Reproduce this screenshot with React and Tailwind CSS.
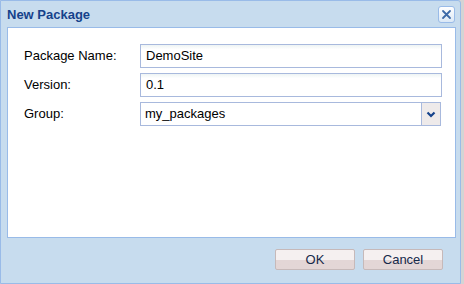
export default function App() {
    const font = { fontFamily: 'Tahoma, "Liberation Sans", sans-serif' };

    const fields = [
        { label: 'Package Name:', value: 'DemoSite' },
        { label: 'Version:', value: '0.1' },
    ];

    return (
        <div className="flex w-[464px] h-[284px] bg-[#d4d4d4]" style={font}>
            <div className="flex flex-col w-[461px] h-full bg-[#c7dcee] border border-[#99bbe8] rounded-tr-[3px]">
                <div className="flex items-center justify-between h-[26px] pl-[6px] pr-[5px]">
                    <span className="text-[13px] font-bold text-[#15428b] leading-none">New Package</span>
                    <button className="w-[17px] h-[17px] mt-[1px] rounded-[3px] border border-[#99bbe8] bg-gradient-to-b from-white to-[#dbe8f6] flex items-center justify-center">
                        <svg width="11" height="11" viewBox="0 0 11 11">
                            <path d="M2 2 L9 9 M9 2 L2 9" stroke="#3d6aa8" strokeWidth="1.8" strokeLinecap="round" />
                        </svg>
                    </button>
                </div>
                <div className="flex-1 ml-[6px] mr-[4px] bg-white border border-[#99bbe8] pt-[16px] pl-[16px]">
                    <div className="flex flex-col gap-[5px]">
                        {fields.map(f => (
                            <div className="flex items-center" key={f.label}>
                                <label className="w-[116px] text-[13px] text-[#000]">{f.label}</label>
                                <div className="w-[302px] h-[24px] border border-[#a8b9dd] bg-gradient-to-b from-[#eef4f4] to-white to-[20%] px-[5px] flex items-center text-[13px] text-black">
                                    {f.value}
                                </div>
                            </div>
                        ))}
                        <div className="flex items-center">
                            <label className="w-[116px] text-[13px] text-[#000]">Group:</label>
                            <div className="w-[301px] h-[24px] border border-[#a8b9dd] bg-white flex items-center text-[13px] text-black">
                                <span className="flex-1 px-[4px]">my_packages</span>
                                <div className="w-[19px] h-full border-l border-[#a8b9dd] bg-[#eeeaea] flex items-center justify-center">
                                    <svg width="10" height="7" viewBox="0 0 10 7">
                                        <path d="M1.5 1.5 L5 5 L8.5 1.5" stroke="#15428b" strokeWidth="2.2" fill="none" />
                                    </svg>
                                </div>
                            </div>
                        </div>
                    </div>
                </div>
                <div className="h-[45px] flex items-center justify-end gap-[8px] pr-[17px] pb-[3px]">
                    <button className="w-[80px] h-[21px] rounded-[2px] border border-[#c6b9b9] bg-gradient-to-b from-[#f5f0f0] from-50% to-[#e3d6d6] to-50% text-[13px] text-[#15294a]">OK</button>
                    <button className="w-[80px] h-[21px] rounded-[2px] border border-[#c6b9b9] bg-gradient-to-b from-[#f5f0f0] from-50% to-[#e3d6d6] to-50% text-[13px] text-[#15294a]">Cancel</button>
                </div>
            </div>
        </div>
    );
}
